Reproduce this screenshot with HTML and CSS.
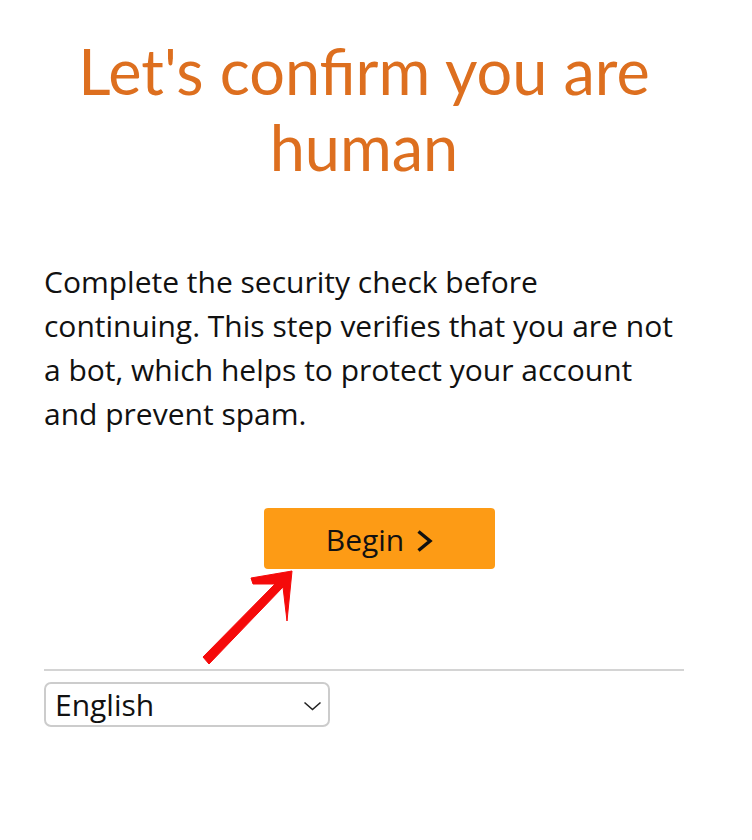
FILE: index.html
```html
<!DOCTYPE html>
<html lang="en">
<head>
<meta charset="utf-8">
<title>Let's confirm you are human</title>
<link rel="stylesheet" href="styles.css">
</head>
<body>
<main class="page">
  <h1 class="title">Let's confirm you are human</h1>
  <p class="intro">Complete the security check before continuing. This step verifies that you are not a bot, which helps to protect your account and prevent spam.</p>
  <div class="actions">
    <button class="begin" type="button">
      <span>Begin</span>
      <svg class="begin-chevron" width="17" height="24" viewBox="0 0 17 24" aria-hidden="true">
        <polyline points="2.5,2.5 14,12 2.5,21.5" fill="none" stroke="#111" stroke-width="3.4" stroke-linecap="butt" stroke-linejoin="miter"/>
      </svg>
    </button>
  </div>
  <hr class="divider">
  <div class="lang">
    <select class="lang-select" aria-label="Language">
      <option>English</option>
    </select>
    <svg class="lang-chevron" width="19" height="10" viewBox="0 0 19 10" aria-hidden="true">
      <polyline points="1.5,1.5 9.5,8.5 17.5,1.5" fill="none" stroke="#222" stroke-width="1.6"/>
    </svg>
  </div>
  <svg class="annot-arrow" width="105" height="105" viewBox="0 0 105 105" aria-hidden="true">
    <path d="M56,13 L97,6 L92,56 L88,22 L14,99 L8,92 L80,19 L58,19 Z" fill="#f50a0a" stroke="#f50a0a" stroke-width="1" stroke-linejoin="round"/>
  </svg>
</main>
</body>
</html>
```
FILE: styles.css
```css
html, body {
  margin: 0;
  padding: 0;
  background: #ffffff;
}

body {
  font-family: "Open Sans", "Noto Sans", sans-serif;
  color: #111111;
}

.page {
  position: relative;
  box-sizing: border-box;
  width: 752px;
  min-height: 840px;
  padding: 33px 68px 0 44px;
}

.title {
  margin: 0;
  font-family: "Lato", "Open Sans", sans-serif;
  font-weight: 400;
  font-size: 63px;
  line-height: 76px;
  color: #dd6f1f;
  text-align: center;
}

.intro {
  margin: 75px 0 0;
  font-size: 30px;
  line-height: 44px;
  font-weight: 400;
}

.actions {
  display: flex;
  margin-top: 72px;
  padding-left: 220px;
}

.begin {
  display: flex;
  align-items: center;
  justify-content: center;
  gap: 12px;
  width: 231px;
  height: 61px;
  padding: 0;
  border: none;
  border-radius: 4px;
  background: #fd9b15;
  font-family: "Open Sans", "Noto Sans", sans-serif;
  font-size: 30px;
  color: #111111;
  cursor: pointer;
}

.begin span {
  display: block;
  line-height: 41px;
  margin-top: 2px;
}

.begin-chevron {
  display: block;
  flex: none;
  margin-top: 5px;
}

.divider {
  margin: 100px 0 0;
  height: 2px;
  border: none;
  background: #d4d4d4;
}

.lang {
  position: relative;
  width: 286px;
  margin-top: 11px;
}

.lang-select {
  display: block;
  box-sizing: border-box;
  width: 286px;
  height: 45px;
  margin: 0;
  padding: 0 0 0 9px;
  border: 2px solid #cccccc;
  border-radius: 7px;
  background: #ffffff;
  -webkit-appearance: none;
  appearance: none;
  font-family: "Open Sans", "Noto Sans", sans-serif;
  font-size: 30px;
  line-height: 41px;
  color: #111111;
}

.lang-chevron {
  position: absolute;
  right: 8px;
  top: 19px;
  pointer-events: none;
}

.annot-arrow {
  position: absolute;
  left: 195px;
  top: 565px;
}
```
